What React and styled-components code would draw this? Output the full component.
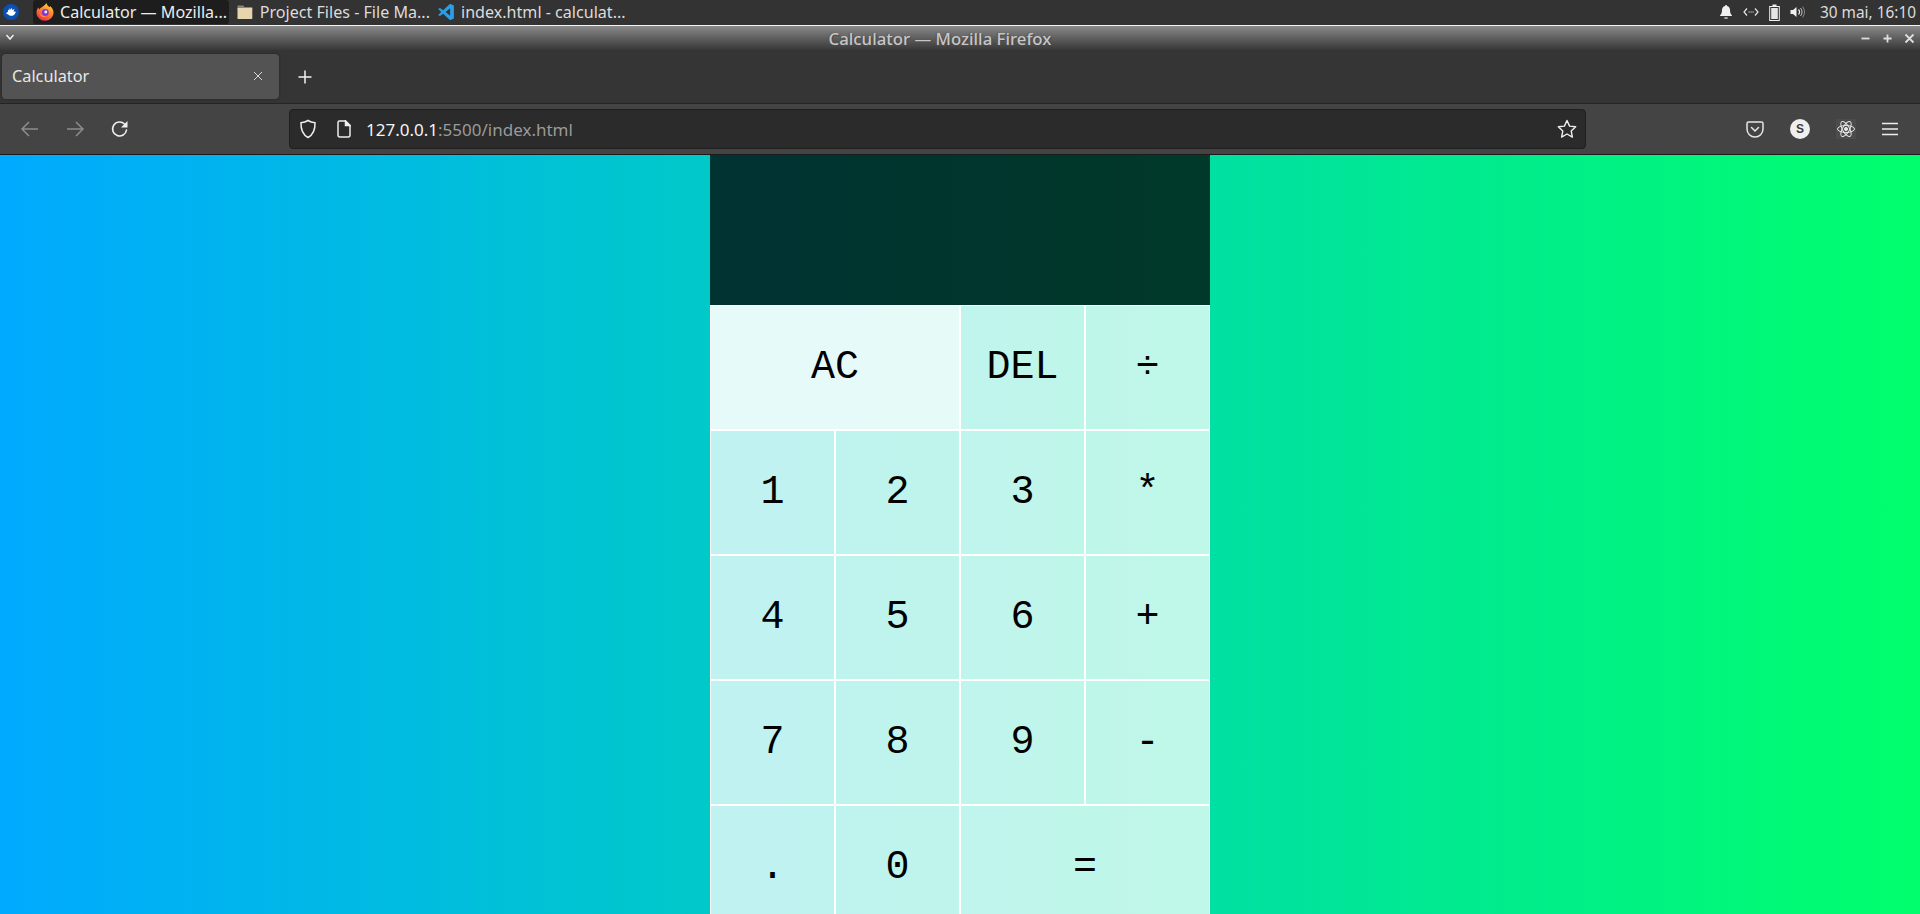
import styled, { createGlobalStyle } from "styled-components";

const GlobalStyle = createGlobalStyle`
  html, body {
    margin: 0;
    padding: 0;
    height: 100%;
    overflow: hidden;
    background: #333;
  }
  * {
    box-sizing: border-box;
  }
`;

const Screen = styled.div`
  display: flex;
  flex-direction: column;
  width: 1920px;
  height: 914px;
  overflow: hidden;
  font-family: "Noto Sans", sans-serif;
`;

const Taskbar = styled.div`
  display: flex;
  align-items: center;
  flex: 0 0 25px;
  padding: 0 4px 1px 3px;
  background: #333333;
  color: #dcdcdc;
  font-size: 16.1px;
`;

const StartButton = styled.div`
  display: flex;
  width: 30px;
`;

const Tasks = styled.div`
  display: flex;
  gap: 4px;
`;

const Task = styled.div`
  display: flex;
  align-items: center;
  gap: 6px;
  width: ${(props) => props.$width}px;
  height: 24px;
  padding-left: 3px;
  border-radius: 3px;
  white-space: nowrap;
  background: ${(props) => (props.$active ? "#1d1d1d" : "transparent")};
  color: ${(props) => (props.$active ? "#eeeeee" : "#dcdcdc")};
`;

const Tray = styled.div`
  display: flex;
  align-items: center;
  gap: 10px;
  margin-left: auto;
`;

const Clock = styled.span`
  margin-left: 5px;
  color: #dcdcdc;
  font-size: 15.4px;
  white-space: nowrap;
`;

const TitleBar = styled.div`
  position: relative;
  display: flex;
  align-items: center;
  justify-content: center;
  flex: 0 0 25px;
  padding-right: 40px;
  border-top: 1px solid #f2f2f2;
  background: linear-gradient(#8a8a8a, #5f5f5f 50%, #383838);
  color: #c6c6c6;
  font-size: 16.8px;
  font-weight: 500;
  white-space: nowrap;
  text-shadow: 1px 1px 1px #4a4a4a, -1px 0 1px #555555;
`;

const MenuCaret = styled.div`
  position: absolute;
  left: 5px;
  top: 6px;
  display: flex;
`;

const WindowControls = styled.div`
  position: absolute;
  right: 3px;
  top: 5px;
  display: flex;
  gap: 7px;
`;

const TabStrip = styled.div`
  display: flex;
  align-items: flex-start;
  flex: 0 0 54px;
  padding: 4px 0 0 2px;
  border-bottom: 1px solid #242424;
  background: #353535;
`;

const Tab = styled.div`
  display: flex;
  align-items: center;
  justify-content: space-between;
  width: 277px;
  height: 45px;
  padding: 0 16px 1px 10px;
  border-radius: 4px;
  background: #535353;
  color: #e8e8e8;
  font-size: 16.3px;
  box-shadow: 0 0 3px rgba(0, 0, 0, 0.35);
`;

const NewTab = styled.div`
  display: flex;
  align-self: center;
  margin: 0 0 3px 19px;
`;

const NavBar = styled.div`
  display: flex;
  align-items: center;
  flex: 0 0 51px;
  padding: 0 22px 0 20px;
  border-bottom: 1px solid #1b1b1b;
  background: #444444;
`;

const NavButtons = styled.div`
  display: flex;
  align-items: center;
  gap: 25px;
  width: 269px;
`;

const UrlBar = styled.div`
  display: flex;
  align-items: center;
  width: 1297px;
  height: 40px;
  padding: 0 8px 0 9px;
  border: 1px solid #1f1f1f;
  border-radius: 4px;
  background: #2b2b2b;
  font-size: 17px;
  color: #9a9a9a;
`;

const UrlIcon = styled.div`
  display: flex;
  margin-right: ${(props) => props.$gap}px;
`;

const UrlHost = styled.span`
  color: #f4f4f4;
`;

const StarIcon = styled.div`
  display: flex;
  margin-left: auto;
`;

const NavTools = styled.div`
  display: flex;
  align-items: center;
  gap: 26px;
  margin-left: auto;
`;

const Page = styled.div`
  flex: 1;
  display: flex;
  justify-content: center;
  min-height: 0;
  overflow: hidden;
  background: linear-gradient(to right, #00aaff, #00ff6c);
`;

const Calculator = styled.div`
  display: grid;
  grid-template-columns: repeat(4, 125px);
  grid-template-rows: 150px repeat(5, 125px);
`;

const Output = styled.div`
  grid-column: 1 / -1;
  background: rgba(0, 0, 0, 0.75);
`;

const Key = styled.div`
  display: flex;
  align-items: center;
  justify-content: center;
  grid-column: span ${(props) => props.$span || 1};
  border: 1px solid #ffffff;
  background: rgba(255, 255, 255, ${(props) => (props.$light ? 0.9 : 0.75)});
  color: #000000;
  font-family: "Liberation Mono", monospace;
  font-size: 40px;
`;

const SBadge = styled.div`
  display: flex;
  align-items: center;
  justify-content: center;
  width: 20px;
  height: 20px;
  border-radius: 50%;
  background: #efefef;
  color: #3c3c3c;
  font-family: "Liberation Sans", sans-serif;
  font-size: 12px;
  font-weight: 700;
`;

const Firefox = () => (
  <svg width="18" height="18" viewBox="0 0 18 18">
    <defs>
      <linearGradient id="ff" x1="0.7" y1="0" x2="0.2" y2="1">
        <stop offset="0" stopColor="#ffd23a" />
        <stop offset="0.5" stopColor="#ff7a2b" />
        <stop offset="1" stopColor="#e8245e" />
      </linearGradient>
    </defs>
    <path d="M10.500 0c.2 2 1.800 3 3.200 4.300.3-.5.5-.8.5-1.300 2 2 3.300 4 3.300 6.500 0 4.500-3.800 8.300-8.500 8.300S.500 14 .500 9.500C.500 7.500 1.500 5.500 2.300 4.500c.2.800.6 1.500 1.100 1.900C4.500 4.500 8 3.500 10.500 0z" fill="url(#ff)" />
    <circle cx="9.300" cy="9.500" r="3.400" fill="#7b3bd6" />
    <circle cx="9.800" cy="9" r="1.400" fill="#f4e9ff" />
    <path d="M3.500 9c1 3 3.500 4.500 7 3.800-2 2-6.500 1.800-7-3.800z" fill="#ff9a2b" />
  </svg>
);

const Mouse = () => (
  <svg width="16" height="16" viewBox="0 0 16 16">
    <circle cx="8" cy="8" r="8" fill="#0b4fb3" />
    <path d="M3 9.500 5 7.500V5.500l1.200 1 .6-2.500 1 2 1-2.500.5 2.500 2.200-1-1 2.500 2.500.2-1.500 2.800c-1 1.500-3.500 1.500-5 1-1-.4-1.500-1.500-3.500-2z" fill="#ffffff" />
  </svg>
);

const Folder = () => (
  <svg width="18" height="16" viewBox="0 0 18 16">
    <path d="M1.500 1.500h6l1 1.500h8v2h-15z" fill="#8d8573" />
    <rect x="1.500" y="4" width="15" height="11" rx="0.5" fill="#e6d5ae" />
  </svg>
);

const VSCode = () => (
  <svg width="18" height="18" viewBox="0 0 24 24">
    <path d="M17.500 1 8.200 9.800 4 6.600 1.500 7.900 5.700 12l-4.200 4.100L4 17.400l4.200-3.200 9.300 8.800 5-2.300V3.300zM17.500 7v10l-6-5z" fill="#2a9fe6" />
  </svg>
);

const Bell = () => (
  <svg width="14" height="16" viewBox="0 0 14 16">
    <path d="M7 1c.6 0 1 .4 1 .9 2 .5 3 2 3 4.100 0 3 .8 4 2 5.500v.5H1v-.5C2.200 10 3 9 3 6c0-2.100 1-3.600 3-4.100 0-.5.400-.9 1-.9z" fill="#f0f0f0" />
    <path d="M5 13.500h4a2 1.300 0 0 1-4 0z" fill="#f0f0f0" />
  </svg>
);

const NetworkIdle = () => (
  <svg width="16" height="14" viewBox="0 0 16 14" fill="none" stroke="#e6e6e6" strokeWidth="1.200">
    <path d="M4 3.500 1 7l3 3.500M12 3.500 15 7l-3 3.500" />
    <path d="M5.500 7h1.200M7.500 7h1.200M9.500 7h1.200" />
  </svg>
);

const Battery = () => (
  <svg width="11" height="17" viewBox="0 0 11 17">
    <rect x="0.700" y="2.500" width="9.600" height="14" fill="none" stroke="#f0f0f0" strokeWidth="1" />
    <rect x="3.500" y="0.500" width="4" height="2" fill="#f0f0f0" />
    <rect x="2.200" y="4" width="6.600" height="11" fill="#e6e6e6" />
  </svg>
);

const Volume = () => (
  <svg width="15" height="14" viewBox="0 0 15 14" fill="none">
    <path d="M0.500 5h2.500L6.500 2v10L3 9H0.500z" fill="#f0f0f0" />
    <path d="M8.500 4.500a3.500 3.500 0 0 1 0 5" stroke="#f0f0f0" strokeWidth="1.200" />
    <path d="M10.500 3a6 6 0 0 1 0 8" stroke="#c8c8c8" strokeWidth="1" />
    <path d="M12.500 1.500a8.500 8.500 0 0 1 0 11" stroke="#888888" strokeWidth="1" />
  </svg>
);

const Caret = () => (
  <svg width="10" height="10" viewBox="0 0 10 10" fill="none" stroke="#eeeeee" strokeWidth="1.500">
    <path d="M1.500 3 5 7l3.500-4" />
  </svg>
);

const WindowGlyph = ({ d }) => (
  <svg width="15" height="15" viewBox="0 0 15 15" fill="none" stroke="#dedede" strokeWidth="1.800">
    <path d={d} />
  </svg>
);

const CloseTab = () => (
  <svg width="10" height="10" viewBox="0 0 10 10" stroke="#d8d8d8" strokeWidth="1">
    <path d="M1 1l8 8M9 1l-8 8" />
  </svg>
);

const Plus = () => (
  <svg width="14" height="14" viewBox="0 0 14 14" stroke="#f2f2f2" strokeWidth="1.500">
    <path d="M7 .5v13M.5 7h13" />
  </svg>
);

const Arrow = ({ flip }) => (
  <svg width="20" height="18" viewBox="0 0 20 18" fill="none" stroke="#8c8c8c" strokeWidth="1.500">
    <path d={flip ? "M2 9h16M11 2l7 7-7 7" : "M18 9H2M9 2 2 9l7 7"} />
  </svg>
);

const Reload = () => (
  <svg width="20" height="20" viewBox="0 0 20 20" fill="none">
    <path d="M16.500 11a7 7 0 1 1-2-6" stroke="#f0f0f0" strokeWidth="1.600" strokeLinecap="round" />
    <path d="M17.500 2v6.500H11z" fill="#f0f0f0" />
  </svg>
);

const Shield = () => (
  <svg width="18" height="20" viewBox="0 0 18 20" fill="none" stroke="#ededed" strokeWidth="1.500">
    <path d="M9 1.500c2 1.300 4.500 2 7 2.200.3 7-2 12-7 14.800C4 15.700 1.700 10.700 2 3.700c2.500-.2 5-.9 7-2.200z" />
  </svg>
);

const PageIcon = () => (
  <svg width="14" height="18" viewBox="0 0 14 18" fill="none" stroke="#ededed" strokeWidth="1.500">
    <path d="M2.500 1h6L13 5.500V15a2 2 0 0 1-2 2H3a2 2 0 0 1-2-2V2.500A1.500 1.500 0 0 1 2.500 1z" />
    <path d="M8.500 1v4.500H13z" fill="#ededed" />
  </svg>
);

const Star = () => (
  <svg width="20" height="20" viewBox="0 0 20 20" fill="none" stroke="#ededed" strokeWidth="1.400" strokeLinejoin="round">
    <path d="M10 1.500l2.600 5.600 6.100.7-4.500 4.200 1.200 6.100L10 15l-5.400 3.100 1.200-6.100L1.300 7.800l6.100-.7z" />
  </svg>
);

const Pocket = () => (
  <svg width="18" height="17" viewBox="0 0 18 17" fill="none" stroke="#e6e6e6" strokeWidth="1.500">
    <path d="M2.500 1h13A1.500 1.500 0 0 1 17 2.500V8a8 8 0 0 1-16 0V2.500A1.500 1.500 0 0 1 2.500 1z" />
    <path d="M5.500 6.500 9 10l3.500-3.500" strokeLinecap="round" />
  </svg>
);

const ReactIcon = () => (
  <svg width="20" height="20" viewBox="0 0 20 20" fill="none" stroke="#e6e6e6" strokeWidth="1">
    <rect width="20" height="20" fill="#4c4c4c" stroke="none" />
    <ellipse cx="10" cy="10" rx="8.500" ry="3.500" />
    <ellipse cx="10" cy="10" rx="8.500" ry="3.500" transform="rotate(60 10 10)" />
    <ellipse cx="10" cy="10" rx="8.500" ry="3.500" transform="rotate(120 10 10)" />
    <circle cx="10" cy="10" r="1.600" fill="#e6e6e6" />
  </svg>
);

const Hamburger = () => (
  <svg width="16" height="14" viewBox="0 0 16 14" stroke="#ededed" strokeWidth="1.500">
    <path d="M0 1.500h16M0 7h16M0 12.500h16" />
  </svg>
);

const keys = [
  { label: "AC", span: 2, light: true },
  { label: "DEL" },
  { label: "÷" },
  { label: "1" },
  { label: "2" },
  { label: "3" },
  { label: "*" },
  { label: "4" },
  { label: "5" },
  { label: "6" },
  { label: "+" },
  { label: "7" },
  { label: "8" },
  { label: "9" },
  { label: "-" },
  { label: "." },
  { label: "0" },
  { label: "=", span: 2 },
];

export default function App() {
  return (
    <Screen>
      <GlobalStyle />
      <Taskbar>
        <StartButton>
          <Mouse />
        </StartButton>
        <Tasks>
          <Task $active $width={196}>
            <Firefox />
            Calculator — Mozilla...
          </Task>
          <Task $width={197}>
            <Folder />
            Project Files - File Ma...
          </Task>
          <Task $width={200}>
            <VSCode />
            index.html - calculat...
          </Task>
        </Tasks>
        <Tray>
          <Bell />
          <NetworkIdle />
          <Battery />
          <Volume />
          <Clock>30 mai, 16:10</Clock>
        </Tray>
      </Taskbar>
      <TitleBar>
        <MenuCaret>
          <Caret />
        </MenuCaret>
        Calculator — Mozilla Firefox
        <WindowControls>
          <WindowGlyph d="M3.500 7.500h8" />
          <WindowGlyph d="M3.500 7.500h8M7.500 3.500v8" />
          <WindowGlyph d="M3.500 3.500l8 8M11.500 3.500l-8 8" />
        </WindowControls>
      </TitleBar>
      <TabStrip>
        <Tab>
          Calculator
          <CloseTab />
        </Tab>
        <NewTab>
          <Plus />
        </NewTab>
      </TabStrip>
      <NavBar>
        <NavButtons>
          <Arrow />
          <Arrow flip />
          <Reload />
        </NavButtons>
        <UrlBar>
          <UrlIcon $gap={20}>
            <Shield />
          </UrlIcon>
          <UrlIcon $gap={15}>
            <PageIcon />
          </UrlIcon>
          <span>
            <UrlHost>127.0.0.1</UrlHost>:5500/index.html
          </span>
          <StarIcon>
            <Star />
          </StarIcon>
        </UrlBar>
        <NavTools>
          <Pocket />
          <SBadge>S</SBadge>
          <ReactIcon />
          <Hamburger />
        </NavTools>
      </NavBar>
      <Page>
        <Calculator>
          <Output />
          {keys.map((key) => (
            <Key key={key.label} $span={key.span} $light={key.light}>
              {key.label}
            </Key>
          ))}
        </Calculator>
      </Page>
    </Screen>
  );
}
